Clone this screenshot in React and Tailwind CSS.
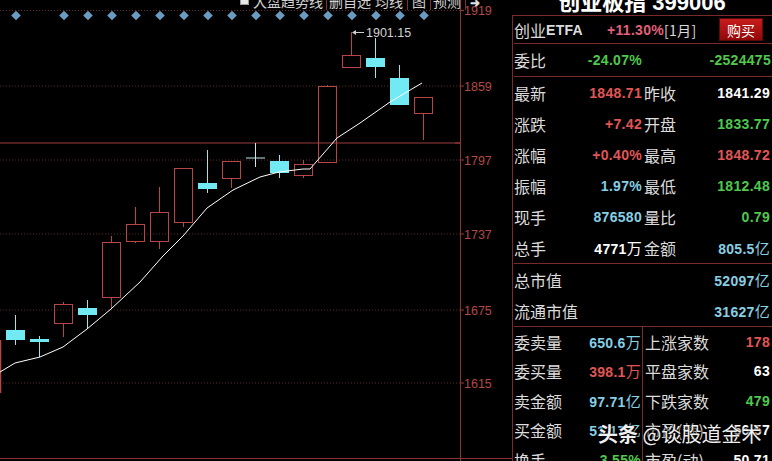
import React from 'react'

const RED = 'text-[#e05656]'
const GRN = 'text-[#4ec84e]'
const CYN = 'text-[#86cfe4]'
const WHT = 'text-white'

const LBL = "font-['Noto_Sans_CJK_SC',sans-serif] text-[16px] leading-none text-[#dcdcdc] whitespace-nowrap"
const NUM = "font-['Liberation_Sans','Noto_Sans_CJK_SC',sans-serif] font-bold text-[14px] leading-none tracking-[0.3px] whitespace-nowrap"

// candles: cx, body top, body bottom, wick high, wick low, kind
const CANDLES = [
  [15.5, 330, 340, 315, 345, 'down'],
  [39.5, 339, 342, 336, 357, 'down'],
  [63.5, 304, 323, 302, 337, 'up'],
  [87.5, 308, 315, 300, 329, 'down'],
  [111.5, 242, 297, 236, 309, 'up'],
  [135.5, 224, 241, 207, 243, 'up'],
  [159.5, 212, 241, 187, 249, 'up'],
  [183.5, 168, 222, 168, 227, 'up'],
  [207.5, 183, 189, 150, 193, 'down'],
  [231.5, 161, 178, 161, 188, 'up'],
  [255.5, 158, 158, 143, 167, 'doji'],
  [279.5, 161, 173, 155, 178, 'down'],
  [303.5, 164, 175, 160, 178, 'up'],
  [327.5, 86, 162, 85, 162, 'up'],
  [351.5, 55, 67, 32, 67, 'up'],
  [375.5, 58, 67, 38, 78, 'down'],
  [399.5, 78, 105, 65, 105, 'down'],
  [423.5, 97, 113, 97, 140, 'up'],
]

const MA = [
  [0, 372], [15, 363], [40, 357], [63, 347], [87, 329], [111, 309], [140, 282],
  [163, 256], [183, 236], [207, 208], [233, 190], [260, 177], [279, 172],
  [303, 169], [310, 169], [337, 138], [360, 123], [390, 102], [422, 83],
]

const GRID = [
  [10.5, '1919'], [86, '1859'], [160, '1797'], [234, '1737'], [310, '1675'], [383, '1615'],
]

const DIAMONDS = [16, 64, 88, 112, 136, 160, 184, 208, 232, 256, 280, 304, 328, 352, 376, 400, 424]

function Chart() {
  return (
    <svg width="512" height="461" viewBox="0 0 512 461" className="block">
      {GRID.map(([y, t]) => (
        <g key={t}>
          <line x1="0" y1={y} x2="460" y2={y} stroke="#5e2828" strokeDasharray="1 2" />
          <line x1="460" y1={y} x2="464" y2={y} stroke="#9a3a3a" />
          <text x="464" y={y + 4.5} fill="#b44848" fontSize="12.5" fontFamily="Liberation Sans, Arial, sans-serif">{t}</text>
        </g>
      ))}
      <line x1="0" y1="143" x2="460" y2="143" stroke="#9c3a3a" />
      <line x1="455" y1="143" x2="460" y2="143" stroke="#9c3a3a" />
      <line x1="460.5" y1="0" x2="460.5" y2="461" stroke="#8e3434" />
      <line x1="0" y1="458.5" x2="512" y2="458.5" stroke="#8e3434" />

      {DIAMONDS.map(x => (
        <rect key={x} x={x - 3.4} y={15.5 - 3.4} width="6.8" height="6.8" fill="#6a9cc2" transform={`rotate(45 ${x} 15.5)`} />
      ))}

      <line x1="0.5" y1="340" x2="0.5" y2="393" stroke="#b84646" strokeWidth="1.5" />

      {CANDLES.map(([cx, bt, bb, hi, lo, k]) => {
        if (k === 'up') {
          return (
            <g key={cx} stroke="#b84646" fill="none">
              {hi < bt && <line x1={cx} y1={hi} x2={cx} y2={bt} />}
              {lo > bb && <line x1={cx} y1={bb} x2={cx} y2={lo} />}
              <rect x={cx - 9} y={bt + 0.5} width="18" height={bb - bt} />
            </g>
          )
        }
        if (k === 'doji') {
          return (
            <g key={cx} stroke="#bfeaf2">
              <line x1={cx} y1={hi} x2={cx} y2={lo} />
              <line x1={cx - 9.5} y1={bt} x2={cx + 9.5} y2={bt} />
            </g>
          )
        }
        return (
          <g key={cx}>
            <line x1={cx} y1={hi} x2={cx} y2={lo} stroke="#8fe9f2" />
            <rect x={cx - 9.5} y={bt} width="19" height={Math.max(bb - bt, 3)} fill="#72eaf4" />
          </g>
        )
      })}

      <polyline points={MA.map(p => p.join(',')).join(' ')} fill="none" stroke="#ffffff" strokeWidth="1" />

      <line x1="353" y1="32.5" x2="364" y2="32.5" stroke="#cfcfcf" />
      <path d="M352 32.5 L356 30 L356 35 Z" fill="#cfcfcf" />
      <text x="366" y="37" fill="#d2d2d2" fontSize="12.5" fontFamily="Liberation Sans, Arial, sans-serif">1901.15</text>
    </svg>
  )
}

function Toolbar() {
  return (
    <div className="absolute left-[240px] top-[-6px] flex h-[15px] items-start text-[14px] leading-none text-[#d2d2d2] font-['Noto_Sans_CJK_SC',sans-serif]">
      <span className="mt-[3px] mr-[4px] h-[8px] w-[9px] bg-[#e6e6e6] border border-[#999]" />
      <span className="pr-[3px]">大盘趋势线</span>
      <span className="h-[16px] w-px bg-[#7a3434]" />
      <span className="px-[2px]">删自选</span>
      <span className="px-[2px]">均线</span>
      <span className="h-[16px] w-px bg-[#7a3434] ml-[2px]" />
      <span className="px-[4px]">图</span>
      <span className="h-[16px] w-px bg-[#7a3434]" />
      <span className="px-[2px]">预测</span>
      <span className="h-[16px] w-px bg-[#7a3434] ml-[2px]" />
      <span className="ml-[4px] mt-[2px] text-[12px] font-bold text-[#e0e0e0]">➜</span>
    </div>
  )
}

function Val({ v, c }) {
  const [n, u] = v.split('|')
  return (
    <span className={`${NUM} ${c}`}>
      {n}
      {u && <span className="font-normal text-[15px] font-['Noto_Sans_CJK_SC',sans-serif]">{u}</span>}
    </span>
  )
}

function Row({ h, l1, v1, c1, l2, v2, c2, split }) {
  return (
    <div className={`flex shrink-0 items-center ${h}`}>
      <div className={`flex h-full w-[129px] items-center justify-between pr-[1px] ${split ? 'border-r border-[#7a2a2a]' : ''}`}>
        <span className={LBL}>{l1}</span>
        <Val v={v1} c={c1} />
      </div>
      <div className={`flex flex-1 items-center justify-between pr-[2px] ${split ? 'pl-[2px]' : 'pl-[1px]'}`}>
        <span className={LBL}>{l2}</span>
        <Val v={v2} c={c2} />
      </div>
    </div>
  )
}

const MID = [
  ['最新', '1848.71', RED, '昨收', '1841.29', WHT],
  ['涨跌', '+7.42', RED, '开盘', '1833.77', GRN],
  ['涨幅', '+0.40%', RED, '最高', '1848.72', RED],
  ['振幅', '1.97%', CYN, '最低', '1812.48', GRN],
  ['现手', '876580', CYN, '量比', '0.79', GRN],
  ['总手', '4771|万', WHT, '金额', '805.5|亿', CYN],
]

const BOT = [
  ['委卖量', '650.6|万', CYN, '上涨家数', '178', RED],
  ['委买量', '398.1|万', RED, '平盘家数', '63', WHT],
  ['卖金额', '97.71|亿', CYN, '下跌家数', '479', GRN],
  ['买金额', '51.17|亿', CYN, '市盈(静)', '56.57', WHT],
  ['换手', '3.55%', GRN, '市盈(动)', '50.71', WHT],
]

function Panel() {
  return (
    <div className="h-[461px] w-[260px] overflow-hidden">
      <div className="relative h-[15px] overflow-hidden">
        <div className="absolute left-0 right-0 top-[-11px] text-center text-[22px] font-bold leading-none text-white font-['Liberation_Sans','Noto_Sans_CJK_SC',sans-serif]">
          <span className="font-['Noto_Sans_CJK_SC',sans-serif]">创业板指</span> 399006
        </div>
      </div>
      <div className="border-l border-t border-[#7a2a2a] pl-px pb-[20px]">
        <div className="flex h-[28px] items-center border-b border-[#7a2a2a]">
          <span className={LBL}>创业</span>
          <span className={`${NUM} text-[13px] text-[#dcdcdc]`}>ETFA</span>
          <span className={`${NUM} ml-[24px] text-[13px] text-[#e0607a]`}>+11.30%</span>
          <span className={`${NUM} text-[13px] font-normal text-[#dcdcdc] font-['Noto_Sans_CJK_SC',sans-serif]`}>[1月]</span>
          <div className="ml-auto mr-[9px] flex h-[23px] w-[44px] items-center justify-center bg-gradient-to-b from-[#c81c1c] to-[#920808] border border-[#5a0a0a] text-[14px] leading-none text-white font-['Noto_Sans_CJK_SC',sans-serif]">
            购买
          </div>
        </div>
        <div className="flex h-[33px] items-center border-b border-[#7a2a2a]">
          <div className="flex w-[129px] items-center justify-between pr-[1px]">
            <span className={LBL}>委比</span>
            <Val v="-24.07%" c={GRN} />
          </div>
          <div className="flex flex-1 justify-end pr-[1px]">
            <Val v="-2524475" c={GRN} />
          </div>
        </div>
        <div className="border-b border-[#7a2a2a]">
          {MID.map(r => (
            <Row key={r[0]} h="h-[31px]" l1={r[0]} v1={r[1]} c1={r[2]} l2={r[3]} v2={r[4]} c2={r[5]} />
          ))}
        </div>
        <div className="border-b border-[#7a2a2a]">
          <div className="flex h-[31px] items-center justify-between pr-[2px]">
            <span className={LBL}>总市值</span>
            <Val v="52097|亿" c={CYN} />
          </div>
          <div className="flex h-[31px] items-center justify-between pr-[2px]">
            <span className={LBL}>流通市值</span>
            <Val v="31627|亿" c={CYN} />
          </div>
        </div>
        <div>
          {BOT.map(r => (
            <Row key={r[0]} split h="h-[29.5px]" l1={r[0]} v1={r[1]} c1={r[2]} l2={r[3]} v2={r[4]} c2={r[5]} />
          ))}
        </div>
      </div>
    </div>
  )
}

export default function App() {
  return (
    <div className="relative flex h-[461px] w-[772px] overflow-hidden bg-black">
      <div className="relative w-[512px] shrink-0">
        <Chart />
        <Toolbar />
      </div>
      <Panel />
      {/* watermark */}
      <div className="absolute left-[598px] top-[424px] whitespace-nowrap text-[20px] leading-none text-white/95 font-['Noto_Sans_CJK_SC',sans-serif] [text-shadow:0_0_3px_#000,1px_1px_2px_#000]">
        <span className="font-bold">头条</span> @谈股道金术
      </div>
    </div>
  )
}
